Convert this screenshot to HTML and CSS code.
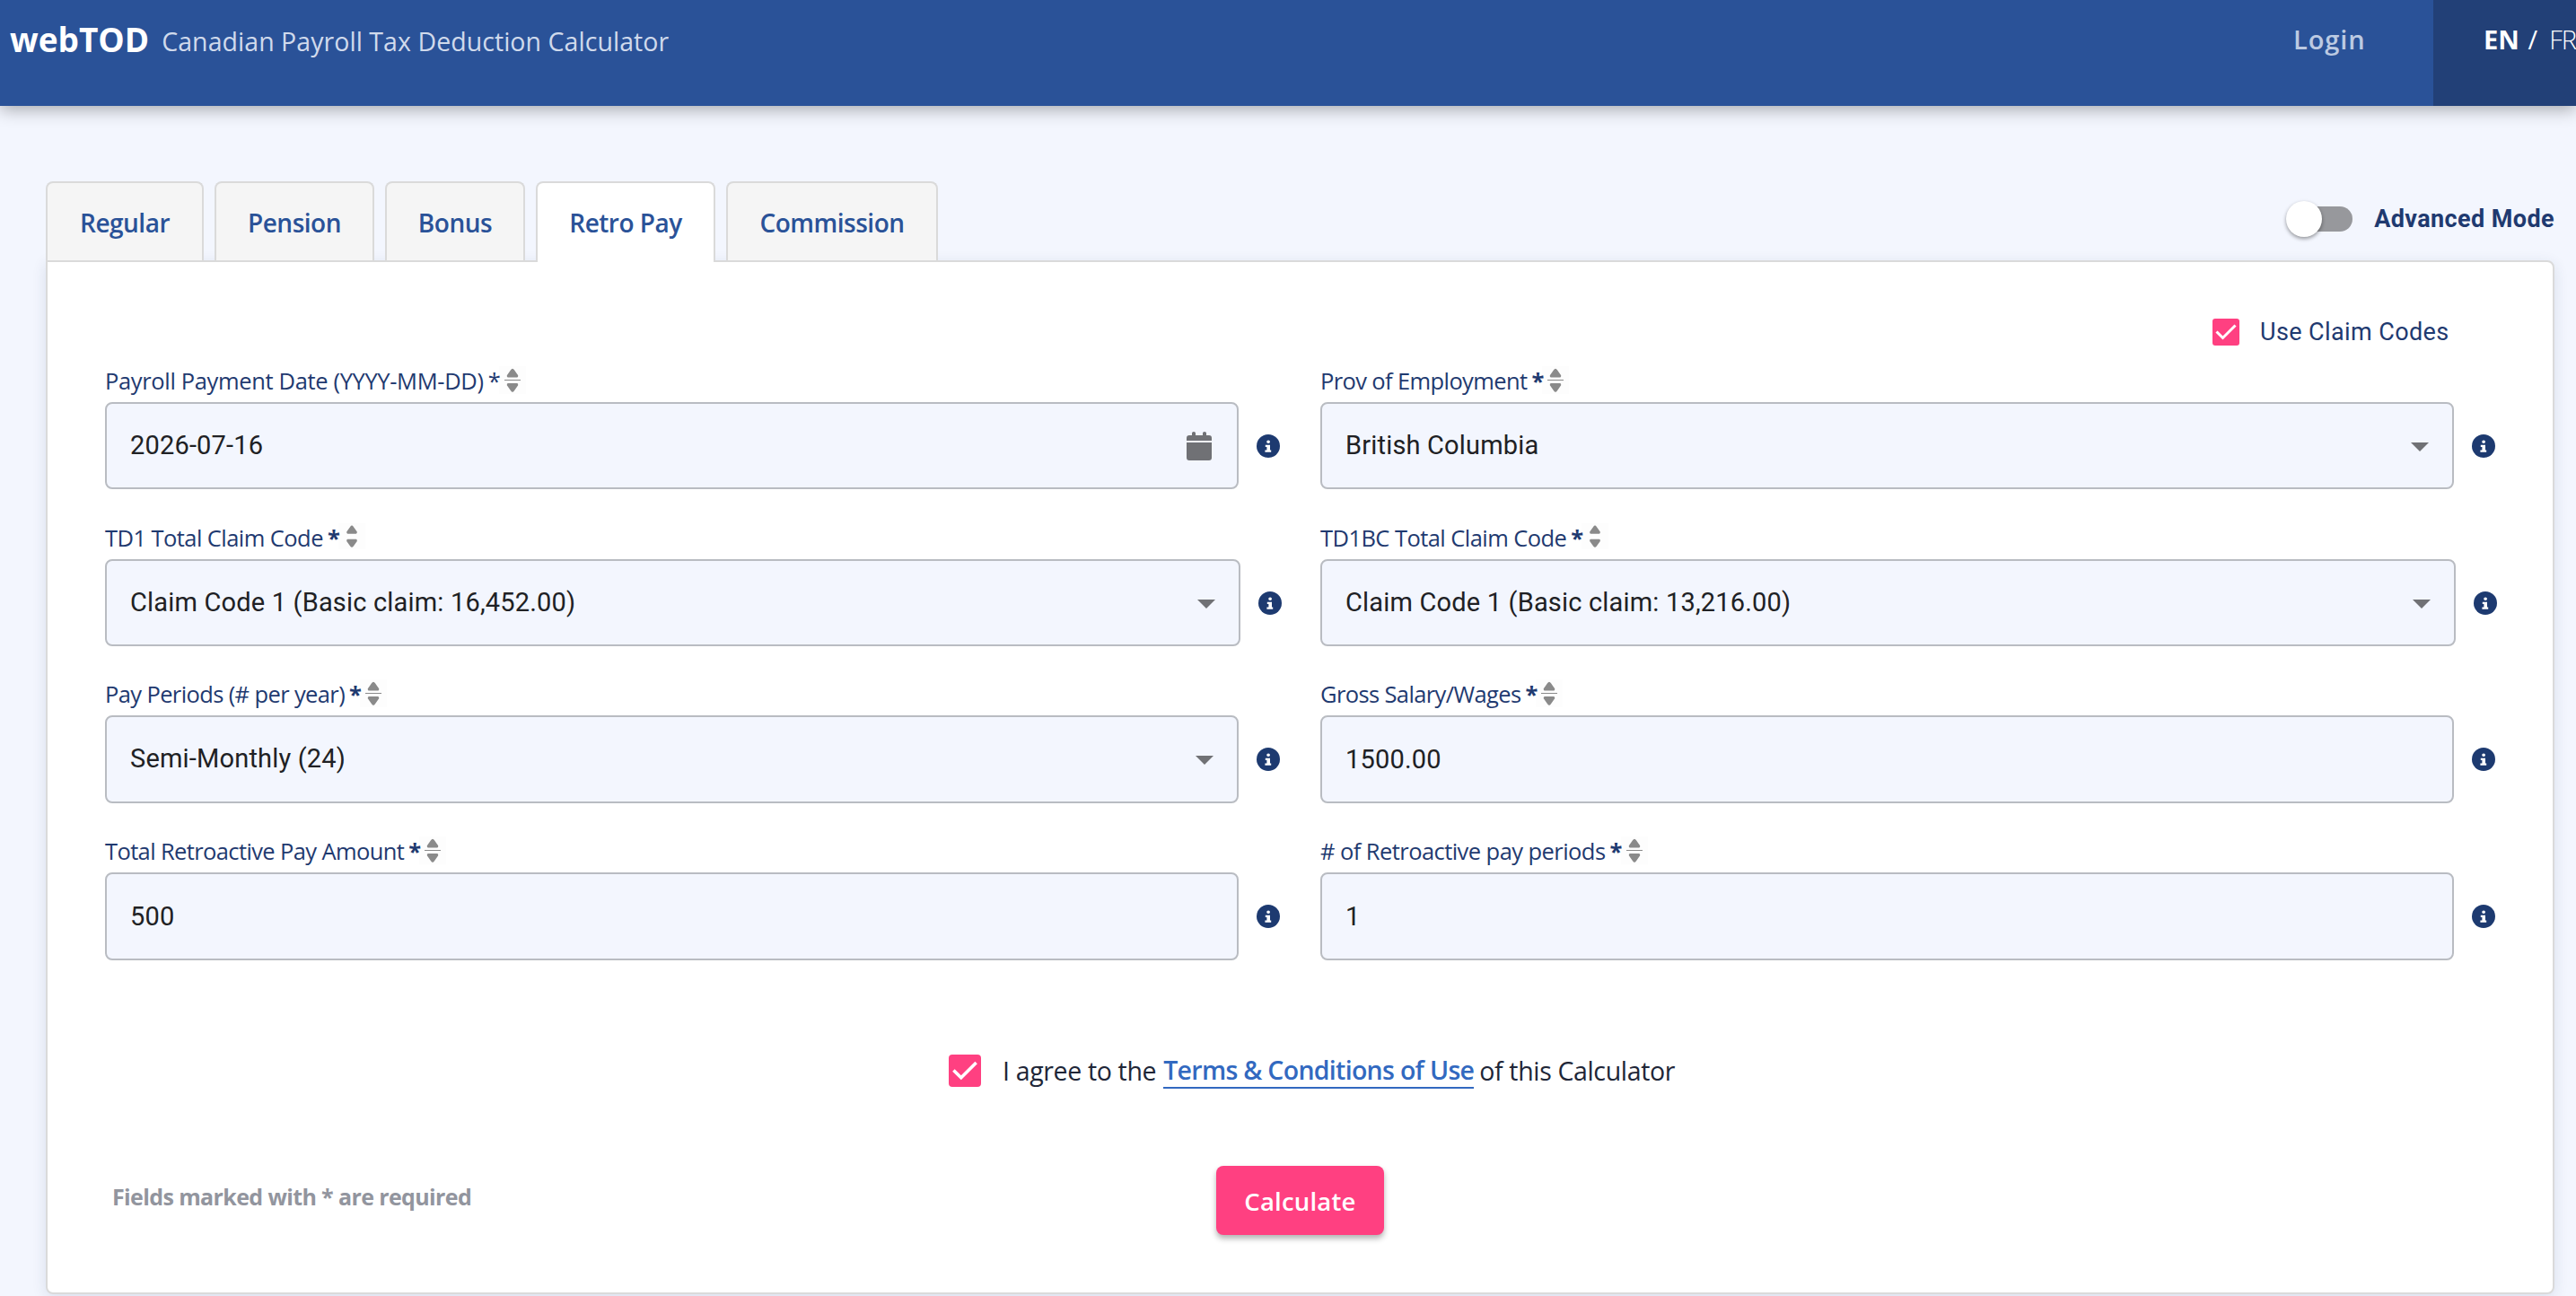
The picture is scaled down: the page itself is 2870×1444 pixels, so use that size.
FILE: index.html
```html
<!DOCTYPE html>
<html lang="en">
<head>
<meta charset="utf-8">
<title>webTOD - Canadian Payroll Tax Deduction Calculator</title>
<link rel="stylesheet" href="styles.css">
</head>
<body>
<svg class="sprite" aria-hidden="true">
  <symbol id="sort" viewBox="0 0 30 31"><path d="M15 2.800Q16 2.800 17 4.300L21.200 10.200Q21.500 12.500 20 12.500H10Q8.500 12.500 8.800 10.200L13 4.300Q14 2.800 15 2.800ZM15 28.700Q16 28.700 17 27.200L21.200 21.300Q21.500 19 20 19H10Q8.500 19 8.800 21.300L13 27.200Q14 28.700 15 28.700Z"/></symbol>
  <symbol id="sort-bar" viewBox="0 0 30 31"><use href="#sort"/><path d="M6 15h18v1H6z"/></symbol>
  <symbol id="info" viewBox="0 0 26 26"><circle cx="13" cy="13" r="13"/><path fill="#fff" d="M11.200 8.200a1.900 1.700 0 1 1 3.800 0a1.900 1.700 0 1 1-3.800 0ZM9.800 11.800h5.200v5.800h1.200v2.200H9.400v-2.200h2v-3.600H9.800Z"/></symbol>
  <symbol id="caret" viewBox="0 0 20 10"><path d="M0 0h20L10 10z"/></symbol>
  <symbol id="calendar" viewBox="0 0 28 32"><path d="M0 10V7q0-3 3-3h3V1.500Q6 0 8 0t2 1.500V4h8V1.500Q18 0 20 0t2 1.500V4h3q3 0 3 3v3ZM0 12h28v17q0 3-3 3H3q-3 0-3-3Z"/></symbol>
  <symbol id="check" viewBox="0 0 30 30"><path d="M4.500 14.500l7 7L25.500 7.500" fill="none" stroke="#fff" stroke-width="3"/></symbol>
</svg>
<header class="topbar">
  <div class="brand"><strong class="logo">webTOD</strong><span class="tagline">Canadian Payroll Tax Deduction Calculator</span></div>
  <a class="login">Login</a>
  <div class="lang"><b>EN</b><span class="slash">/</span><span class="fr">FR</span></div>
</header>
<main>
  <div class="tabrow">
    <nav class="tabs">
      <a class="tab regular">Regular</a><a class="tab pension">Pension</a><a class="tab bonus">Bonus</a><a class="tab retro active">Retro Pay</a><a class="tab commission">Commission</a>
    </nav>
    <label class="mode"><span class="switch"><span class="knob"></span></span><span>Advanced Mode</span></label>
  </div>
  <section class="card">
    <label class="claims"><span class="box"><svg><use href="#check"/></svg></span><span>Use Claim Codes</span></label>
    <div class="fields">
      <div class="cell"><div class="label"><span class="loose">Payroll Payment Date (YYYY-MM-DD)</span><i>*</i><svg class="sort"><use href="#sort-bar"/></svg></div><div class="line"><div class="input pick"><span>2026-07-16</span><svg class="cal"><use href="#calendar"/></svg></div><svg class="info"><use href="#info"/></svg></div></div>
      <div class="cell"><div class="label"><span>Prov of Employment</span><b>*</b><svg class="sort"><use href="#sort-bar"/></svg></div><div class="line"><div class="input pick"><span>British Columbia</span><svg class="caret"><use href="#caret"/></svg></div><svg class="info"><use href="#info"/></svg></div></div>
      <div class="cell wide"><div class="label"><span class="snug">TD1 Total Claim Code</span><b>*</b><svg class="sort"><use href="#sort"/></svg></div><div class="line"><div class="input pick"><span>Claim Code 1 (Basic claim: 16,452.00)</span><svg class="caret"><use href="#caret"/></svg></div><svg class="info"><use href="#info"/></svg></div></div>
      <div class="cell wide"><div class="label"><span class="snug">TD1BC Total Claim Code</span><b>*</b><svg class="sort"><use href="#sort"/></svg></div><div class="line"><div class="input pick"><span>Claim Code 1 (Basic claim: 13,216.00)</span><svg class="caret"><use href="#caret"/></svg></div><svg class="info"><use href="#info"/></svg></div></div>
      <div class="cell"><div class="label"><span>Pay Periods (# per year)</span><b>*</b><svg class="sort"><use href="#sort-bar"/></svg></div><div class="line tall"><div class="input pick"><span>Semi-Monthly (24)</span><svg class="caret"><use href="#caret"/></svg></div><svg class="info"><use href="#info"/></svg></div></div>
      <div class="cell"><div class="label"><span>Gross Salary/Wages</span><b>*</b><svg class="sort"><use href="#sort-bar"/></svg></div><div class="line tall"><div class="input"><span>1500.00</span></div><svg class="info"><use href="#info"/></svg></div></div>
      <div class="cell"><div class="label"><span>Total Retroactive Pay Amount</span><b>*</b><svg class="sort"><use href="#sort-bar"/></svg></div><div class="line tall"><div class="input"><span>500</span></div><svg class="info"><use href="#info"/></svg></div></div>
      <div class="cell"><div class="label"><span class="snug"># of Retroactive pay periods</span><b>*</b><svg class="sort"><use href="#sort-bar"/></svg></div><div class="line tall"><div class="input"><span>1</span></div><svg class="info"><use href="#info"/></svg></div></div>
    </div>
    <label class="agree"><span class="box"><svg><use href="#check"/></svg></span><span class="lead">I agree to the</span><a>Terms &amp; Conditions of Use</a><span>of this Calculator</span></label>
    <div class="actions"><span class="note">Fields marked with * are required</span><button class="calc">Calculate</button></div>
  </section>
</main>
</body>
</html>
```
FILE: styles.css
```css
* { box-sizing: border-box; }
body { margin: 0; height: 1444px; overflow: hidden; background: #f3f6fe; color: #1f3a70; font-family: "Open Sans", "Noto Sans", sans-serif; display: flex; flex-direction: column; }
.sprite { display: none; }
svg { display: block; flex: none; }

/* Header */
.topbar { flex: none; height: 118px; background: #2a5298; color: #fff; display: flex; box-shadow: 0 4px 18px rgba(0,0,0,.32); white-space: nowrap; }
.brand { flex: 1; display: flex; align-items: flex-start; gap: 14px; padding: 18px 0 0 11px; line-height: 52px; }
.logo { font-size: 37px; font-weight: 700; }
.tagline { padding-top: 2px; font-size: 28.500px; letter-spacing: .05px; color: #d0daec; }
.login { width: 156px; padding-top: 18px; line-height: 52px; font-size: 29px; font-weight: 600; letter-spacing: .9px; color: #bccae2; }
.lang { width: 159px; padding: 18px 0 0 56px; background: #224077; display: flex; line-height: 52px; font-size: 29px; overflow: hidden; }
.lang b { width: 50px; }
.slash { width: 24px; }
.fr { font-weight: 300; letter-spacing: -1px; }

/* Tabs and mode switch */
main { flex: none; padding: 84px 24px 0 51px; }
.tabrow { height: 88px; display: flex; justify-content: space-between; }
.tabs { display: flex; gap: 12px; position: relative; z-index: 1; }
.tab { height: 88px; border: 2px solid #dadada; border-bottom: 0; border-radius: 8px 8px 0 0; background: #f5f5f5; color: #2a5298; font-size: 28px; font-weight: 600; letter-spacing: -.5px; line-height: 88px; text-align: center; white-space: nowrap; }
.tab.active { height: 90px; background: #fff; }
.regular { width: 176px; }
.pension { width: 178px; }
.bonus { width: 156px; }
.retro { width: 200px; }
.commission { width: 236px; }
.mode { display: flex; align-items: center; height: 40px; margin-top: 22px; font: 700 27px/40px Roboto, sans-serif; letter-spacing: .4px; white-space: nowrap; }
.switch { width: 74px; height: 28px; margin-right: 24px; display: flex; align-items: center; background: linear-gradient(#97989c, #97989c) right / 72px 100% no-repeat; border-radius: 14px; }
.knob { width: 40px; height: 40px; border-radius: 50%; background: #fff; box-shadow: 0 2px 4px rgba(0,0,0,.4); }

/* Form card */
.card { height: 1152px; border: 2px solid #dadada; border-radius: 0 8px 8px 8px; background: #fff; box-shadow: 0 4px 16px rgba(30,60,100,.12); padding: 63px 0 0 64px; }
.claims { display: flex; align-items: center; gap: 23px; height: 30px; margin-left: 2348px; font: 27px/32px Roboto, sans-serif; letter-spacing: .4px; white-space: nowrap; }
.box { width: 30px; height: 30px; border-radius: 3px; background: #ff4081; flex: none; }
.box svg { width: 100%; height: 100%; }
.fields { display: grid; grid-template-columns: 1309px 1309px; grid-template-rows: 175px 174px 175px 170px; column-gap: 45px; margin-top: 15px; }
.label { height: 48px; display: flex; align-items: center; font-size: 25.500px; letter-spacing: -.62px; line-height: 48px; white-space: nowrap; }
.label .snug { letter-spacing: -.56px; }
.label .loose { letter-spacing: -.35px; }
.label i, .label b { width: 17px; padding-left: 5px; font-style: normal; letter-spacing: 0; position: relative; z-index: 1; }
.sort { width: 30px; height: 31px; margin-top: -1px; fill: #8a8a8a; background: #fdfdfd; }
.wide .sort { height: 29px; margin-top: -3px; }
.line { height: 97px; display: flex; align-items: center; gap: 20px; }
.tall { height: 98px; }
.input { flex: none; width: 1263px; height: 100%; border: 2px solid #b9bcc2; border-radius: 8px; background: #f3f6fe; color: #202124; padding: 0 26px; display: flex; align-items: center; justify-content: space-between; font: 29px/40px Roboto, sans-serif; letter-spacing: .18px; white-space: nowrap; }
.pick span { padding-bottom: 2px; }
.wide .input { width: 1265px; }
.info { width: 26px; height: 26px; fill: #1d3a70; }
.cal { width: 28px; height: 32px; margin-right: 2px; fill: #707175; }
.caret { width: 20px; height: 10px; margin-top: 2px; fill: #707175; }

/* Terms and submit */
.agree { height: 44px; margin: 77px 0 0 940px; display: flex; align-items: center; font-size: 28.500px; letter-spacing: -.35px; line-height: 42px; color: #202637; white-space: nowrap; }
.agree .box { width: 36px; height: 36px; border-radius: 4px; }
.lead { margin: 0 8px 0 24px; }
.agree a { font-weight: 600; letter-spacing: -.7px; color: #3269c0; border-bottom: 2px solid #3269c0; margin-right: 6px; line-height: 38px; }
.actions { display: flex; align-items: center; height: 77px; margin-top: 84px; }
.note { width: 1238px; padding: 0 0 9px 8px; font-size: 25px; font-weight: 700; letter-spacing: -.62px; color: #92959e; line-height: 40px; }
.calc { width: 187px; height: 77px; border: 0; padding: 2px 0 0; border-radius: 8px; background: #ff4081; color: #fff; font: 600 27.500px/75px "Open Sans", sans-serif; letter-spacing: .2px; box-shadow: 0 4px 6px rgba(0,0,0,.3); }
```
